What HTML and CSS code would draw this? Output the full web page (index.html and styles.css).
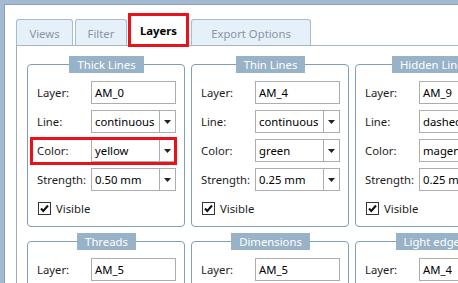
FILE: index.html
```html
<!DOCTYPE html>
<html>
<head>
<meta charset="utf-8">
<link rel="stylesheet" href="styles.css">
</head>
<body>
<div class="frame">
  <div class="client">
    <div class="tabbar">
      <div class="tab t-views">Views</div>
      <div class="tab t-filter">Filter</div>
      <div class="tab active">Layers</div>
      <div class="tab t-export">Export Options</div>
    </div>
    <div class="panel">
      <div class="groups">
        <div class="group">
          <div class="legend">Thick Lines</div>
          <div class="row"><span class="label">Layer:</span><div class="field">AM_0</div></div>
          <div class="row"><span class="label">Line:</span><div class="combo"><span class="val">continuous</span><span class="btn"><svg width="7" height="4" viewBox="0 0 7 4"><path d="M0 0H7L3.5 4Z" fill="#222"/></svg></span></div></div>
          <div class="row hl"><span class="label">Color:</span><div class="combo"><span class="val">yellow</span><span class="btn"><svg width="7" height="4" viewBox="0 0 7 4"><path d="M0 0H7L3.5 4Z" fill="#222"/></svg></span></div></div>
          <div class="row"><span class="label">Strength:</span><div class="combo"><span class="val">0.50 mm</span><span class="btn"><svg width="7" height="4" viewBox="0 0 7 4"><path d="M0 0H7L3.5 4Z" fill="#222"/></svg></span></div></div>
          <div class="check"><span class="box"><svg width="11" height="11" viewBox="0 0 11 11"><path d="M2 5.5L4.3 8L9 2.5" fill="none" stroke="#111" stroke-width="2"/></svg></span><span>Visible</span></div>
        </div>
        <div class="group">
          <div class="legend">Thin Lines</div>
          <div class="row"><span class="label">Layer:</span><div class="field">AM_4</div></div>
          <div class="row"><span class="label">Line:</span><div class="combo"><span class="val">continuous</span><span class="btn"><svg width="7" height="4" viewBox="0 0 7 4"><path d="M0 0H7L3.5 4Z" fill="#222"/></svg></span></div></div>
          <div class="row"><span class="label">Color:</span><div class="combo"><span class="val">green</span><span class="btn"><svg width="7" height="4" viewBox="0 0 7 4"><path d="M0 0H7L3.5 4Z" fill="#222"/></svg></span></div></div>
          <div class="row"><span class="label">Strength:</span><div class="combo"><span class="val">0.25 mm</span><span class="btn"><svg width="7" height="4" viewBox="0 0 7 4"><path d="M0 0H7L3.5 4Z" fill="#222"/></svg></span></div></div>
          <div class="check"><span class="box"><svg width="11" height="11" viewBox="0 0 11 11"><path d="M2 5.5L4.3 8L9 2.5" fill="none" stroke="#111" stroke-width="2"/></svg></span><span>Visible</span></div>
        </div>
        <div class="group">
          <div class="legend">Hidden Lines</div>
          <div class="row"><span class="label">Layer:</span><div class="field">AM_9</div></div>
          <div class="row"><span class="label">Line:</span><div class="combo"><span class="val">dashed</span><span class="btn"><svg width="7" height="4" viewBox="0 0 7 4"><path d="M0 0H7L3.5 4Z" fill="#222"/></svg></span></div></div>
          <div class="row"><span class="label">Color:</span><div class="combo"><span class="val">magenta</span><span class="btn"><svg width="7" height="4" viewBox="0 0 7 4"><path d="M0 0H7L3.5 4Z" fill="#222"/></svg></span></div></div>
          <div class="row"><span class="label">Strength:</span><div class="combo"><span class="val">0.25 mm</span><span class="btn"><svg width="7" height="4" viewBox="0 0 7 4"><path d="M0 0H7L3.5 4Z" fill="#222"/></svg></span></div></div>
          <div class="check"><span class="box"><svg width="11" height="11" viewBox="0 0 11 11"><path d="M2 5.5L4.3 8L9 2.5" fill="none" stroke="#111" stroke-width="2"/></svg></span><span>Visible</span></div>
        </div>
        <div class="group">
          <div class="legend">Threads</div>
          <div class="row"><span class="label">Layer:</span><div class="field">AM_5</div></div>
        </div>
        <div class="group">
          <div class="legend">Dimensions</div>
          <div class="row"><span class="label">Layer:</span><div class="field">AM_5</div></div>
        </div>
        <div class="group">
          <div class="legend">Light edges</div>
          <div class="row"><span class="label">Layer:</span><div class="field">AM_4</div></div>
        </div>
      </div>
    </div>
  </div>
</div>
</body>
</html>
```

FILE: styles.css
```css
html, body {
  margin: 0;
  height: 100%;
  overflow: hidden;
}
body {
  background: #ffffff;
  font-family: "Noto Sans", "Open Sans", sans-serif;
  font-size: 11.3px;
  color: #1c1c1c;
}
.frame {
  height: 100%;
  box-sizing: border-box;
  border-top: 4px solid #a4bad2;
  border-left: 4px solid #a4bad2;
}
.client {
  height: 100%;
  box-sizing: border-box;
  border-top: 1px solid #8aa1b9;
  border-left: 1px solid #8aa1b9;
  padding: 8px 0 0 11px;
}
.tabbar {
  display: flex;
  align-items: flex-end;
  height: 32px;
  position: relative;
  z-index: 1;
}
.tab {
  height: 26px;
  box-sizing: border-box;
  border: 1px solid #a9bccd;
  border-bottom: 0;
  border-radius: 3px 3px 0 0;
  background: #e6f0f9;
  color: #8696a7;
  display: flex;
  align-items: center;
  justify-content: center;
  padding-top: 1px;
}
.t-views { width: 57px; }
.t-filter { width: 52px; margin-left: 2px; }
.tab.active {
  width: 61px;
  height: 34px;
  margin-left: 1px;
  margin-bottom: -2px;
  border: 3px solid #e8121a;
  border-radius: 0;
  background: #ffffff;
  color: #000000;
  font-weight: bold;
  padding-top: 0;
}
.t-export { width: 120px; margin-left: 2px; }
.panel {
  border-top: 1px solid #a6b6c6;
  border-left: 1px solid #a7a7a7;
  padding: 10px 0 0 10px;
  height: 300px;
}
.groups {
  display: grid;
  grid-template-columns: repeat(3, 158px);
  column-gap: 6px;
  row-gap: 6px;
}
.group {
  display: flex;
  flex-direction: column;
  margin-top: 8px;
  border: 1px solid #819fb6;
  border-radius: 4px;
  padding: 0 8px 10px 9px;
}
.legend {
  align-self: center;
  margin-top: -9px;
  margin-bottom: 8px;
  height: 17px;
  line-height: 17px;
  padding: 0 8px;
  background: #98b2c8;
  color: #ffffff;
  white-space: nowrap;
}
.row {
  display: flex;
  align-items: center;
  height: 23px;
  position: relative;
}
.row + .row {
  margin-top: 6px;
}
.label {
  width: 54px;
  flex: none;
}
.field, .combo {
  width: 85px;
  height: 23px;
  box-sizing: border-box;
  border: 1px solid #adadad;
  background: #ffffff;
  color: #000000;
  display: flex;
  align-items: center;
}
.field {
  padding-left: 3px;
}
.val {
  flex: 1;
  padding-left: 3px;
  white-space: nowrap;
  overflow: hidden;
}
.btn {
  width: 16px;
  height: 100%;
  box-sizing: border-box;
  border-left: 1px solid #adadad;
  display: flex;
  align-items: center;
  justify-content: center;
}
.row.hl::after {
  content: "";
  position: absolute;
  left: -7px;
  right: -1px;
  top: -2px;
  bottom: -3px;
  border: 3px solid #e8121a;
}
.check {
  display: flex;
  align-items: center;
  height: 16px;
  margin-top: 9px;
  padding-left: 1px;
}
.box {
  width: 13px;
  height: 13px;
  box-sizing: border-box;
  border: 1px solid #333333;
  background: #ffffff;
  display: flex;
  align-items: center;
  justify-content: center;
  margin-right: 5px;
}
.box svg {
  display: block;
}
```
